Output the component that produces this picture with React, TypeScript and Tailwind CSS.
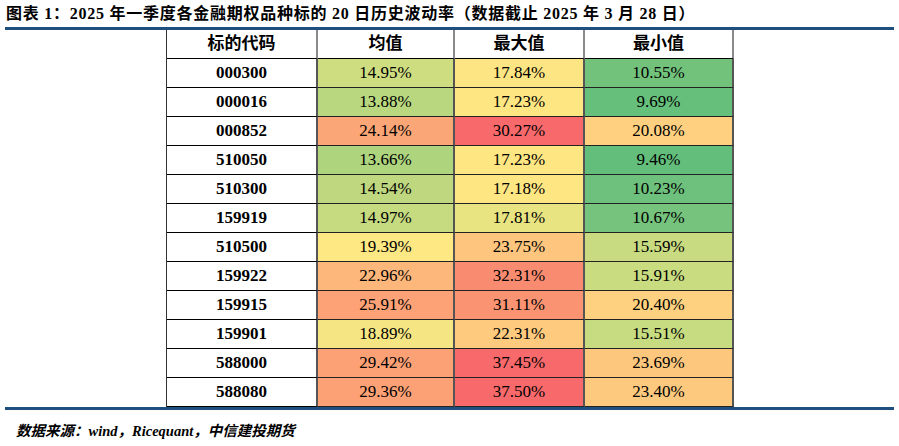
import React from "react";

type Row = { code: string; cells: [string, string][] };

const rows: Row[] = [
  { code: "000300", cells: [["14.95%", "#CEDD80"], ["17.84%", "#FEE583"], ["10.55%", "#72C27C"]] },
  { code: "000016", cells: [["13.88%", "#B9D77E"], ["17.23%", "#FEE683"], ["9.69%", "#66BF7B"]] },
  { code: "000852", cells: [["24.14%", "#FBA676"], ["30.27%", "#F8696B"], ["20.08%", "#FED07F"]] },
  { code: "510050", cells: [["13.66%", "#AED47E"], ["17.23%", "#FEE683"], ["9.46%", "#63BE7B"]] },
  { code: "510300", cells: [["14.54%", "#BFD87F"], ["17.18%", "#FEE683"], ["10.23%", "#6EC17C"]] },
  { code: "159919", cells: [["14.97%", "#C6DA80"], ["17.81%", "#E8E482"], ["10.67%", "#75C37C"]] },
  { code: "510500", cells: [["19.39%", "#FEE883"], ["23.75%", "#FDC57D"], ["15.59%", "#C8DB80"]] },
  { code: "159922", cells: [["22.96%", "#FDB77A"], ["32.31%", "#F98C70"], ["15.91%", "#CADC80"]] },
  { code: "159915", cells: [["25.91%", "#FCA276"], ["31.11%", "#FA9372"], ["20.40%", "#FDD17F"]] },
  { code: "159901", cells: [["18.89%", "#F6E683"], ["22.31%", "#FDCA7E"], ["15.51%", "#C7DB80"]] },
  { code: "588000", cells: [["29.42%", "#FCA176"], ["37.45%", "#F8696B"], ["23.69%", "#FDC77D"]] },
  { code: "588080", cells: [["29.36%", "#FCA176"], ["37.50%", "#F8696B"], ["23.40%", "#FDC97E"]] },
];

const serif = { fontFamily: "'Liberation Serif', 'Noto Sans CJK SC', serif" };

export default function App() {
  return (
    <div className="w-[899px] h-[446px] bg-white text-black flex flex-col" style={serif}>
      <div className="h-[27px] flex items-center pl-[6px] text-[16px] tracking-[0.75px] font-bold whitespace-nowrap leading-none">
        图表 1：2025 年一季度各金融期权品种标的 20 日历史波动率（数据截止 2025 年 3 月 28 日）
      </div>
      <div className="mx-[5px] w-[889px] h-[3px] bg-[#1f4f7f]" />
      <div className="mx-auto w-[567px] grid grid-cols-[151px_137px_130px_149px] border-l border-l-[#333]">
        {["标的代码", "均值", "最大值", "最小值"].map((h) => (
          <div
            key={h}
            className="h-[29px] flex items-center justify-center font-bold text-[17px] border-b border-b-black border-r-2 border-r-[#8a8a8a]"
          >
            {h}
          </div>
        ))}
        {rows.map((r, ri) => (
          <React.Fragment key={r.code + ri}>
            <div className="h-[29px] flex items-center justify-center font-bold text-[17px] border-b border-b-black border-r-2 border-r-[#555]">
              {r.code}
            </div>
            {r.cells.map(([v, c], ci) => (
              <div
                key={ci}
                className="h-[29px] flex items-center justify-center text-[17px] border-b border-b-[#222] border-r-2 border-r-[#555]"
                style={{ backgroundColor: c }}
              >
                {v}
              </div>
            ))}
          </React.Fragment>
        ))}
      </div>
      <div className="mx-[5px] w-[889px] h-[3px] bg-[#1f4f7f]" />
      <div className="pl-[16px] pt-[14px] text-[14.5px] font-bold italic leading-none whitespace-nowrap">
        数据来源：wind，Ricequant，中信建投期货
      </div>
    </div>
  );
}
